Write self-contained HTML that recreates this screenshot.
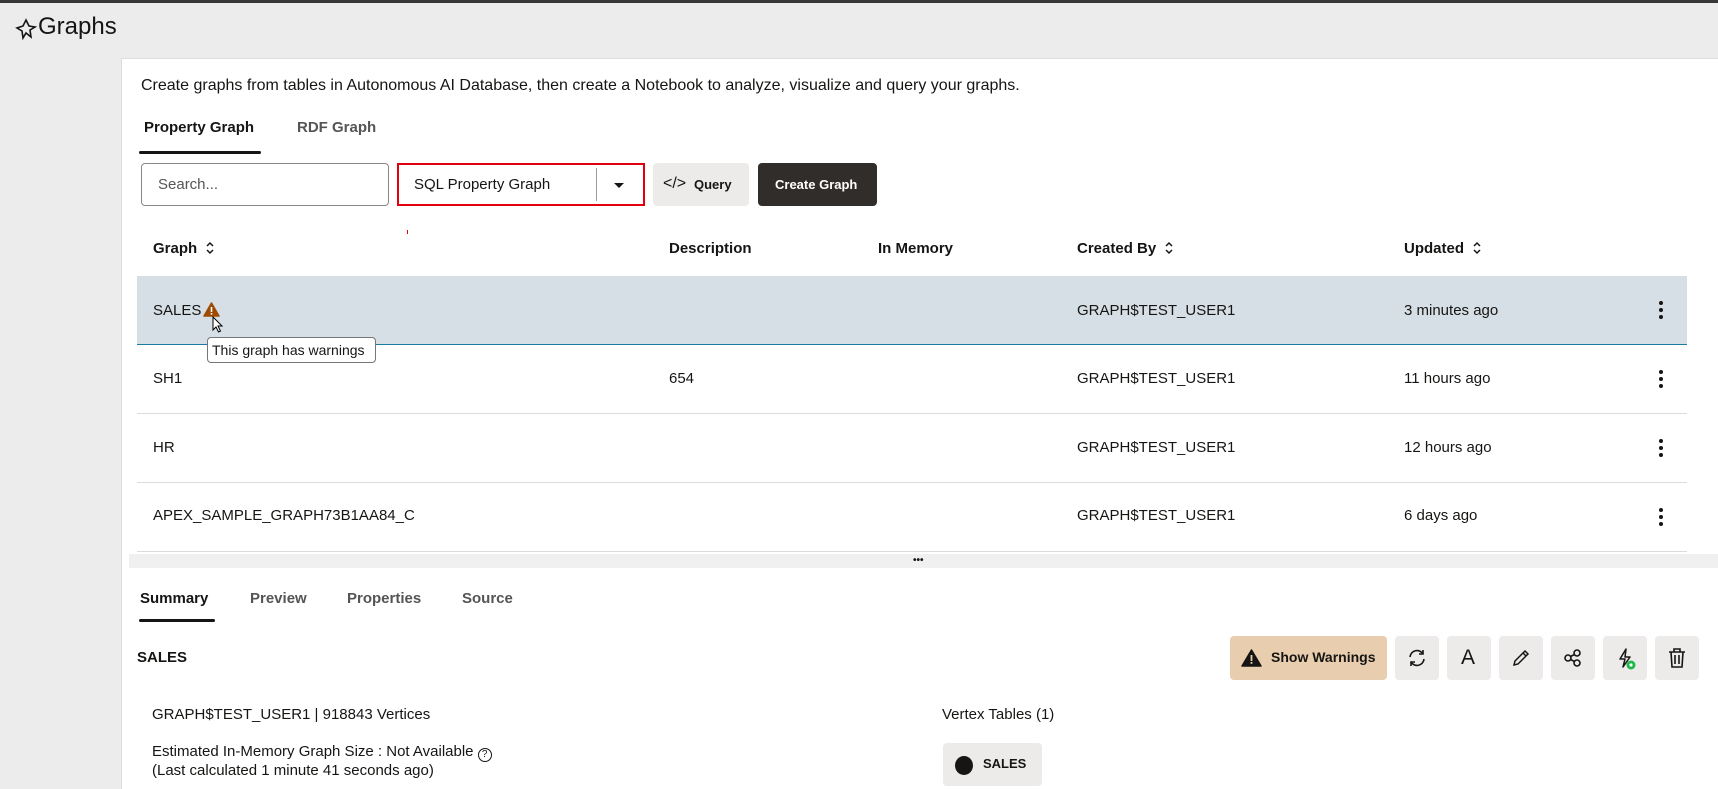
<!DOCTYPE html>
<html><head><meta charset="utf-8"><style>
*{box-sizing:border-box;margin:0;padding:0}
body{width:1718px;height:789px;overflow:hidden;background:#ececec;font-family:"Liberation Sans",sans-serif;color:#161513;position:relative}
.a{position:absolute;white-space:nowrap}
.topbar{position:absolute;left:0;top:0;width:1718px;height:3px;background:#3a3836}
.panel{position:absolute;left:121px;top:58px;width:1597px;height:731px;background:#fff;border-left:1px solid #ddd;border-top:1px solid #ddd}
.f15{font-size:15px}
.b{font-weight:bold}
.btn{position:absolute;background:#ecebea;border-radius:4px}
.sep{position:absolute;left:137px;width:1550px;height:1px;background:#dcdcdc}
.kb{position:absolute;width:4px}
.kb i{display:block;width:4px;height:4px;border-radius:2px;background:#161513;margin-bottom:3px}
.srt{display:inline-block;vertical-align:-2px;margin-left:8px}
</style></head><body>
<div class="topbar"></div>
<svg class="a" style="left:15px;top:18px" width="22" height="22" viewBox="0 0 22 22"><path d="M11 2 L14 8 L20 9 L15 12 L16 19 L11 15 L8 20 L7 13 L2 10 L8 8 Z" fill="none" stroke="#161513" stroke-width="1.6"/></svg>
<div class="a" style="left:38px;top:13px;font-size:24px">Graphs</div>
<div class="panel"></div>
<div class="a" style="left:141px;top:77px;font-size:16px">Create graphs from tables in Autonomous AI Database, then create a Notebook to analyze, visualize and query your graphs.</div>
<div class="a f15 b" style="left:144px;top:119px">Property Graph</div>
<div class="a f15 b" style="left:297px;top:119px;color:#555">RDF Graph</div>
<div class="a" style="left:139px;top:151px;width:122px;height:3px;background:#161513;border-radius:2px"></div>
<div class="a" style="left:141px;top:163px;width:248px;height:43px;border:1px solid #8a8886;border-radius:4px"></div>
<div class="a f15" style="left:158px;top:176px;color:#555">Search...</div>
<div class="a" style="left:397px;top:163px;width:248px;height:43px;border:2px solid #e0000e"></div>
<div class="a f15" style="left:414px;top:176px">SQL Property Graph</div>
<div class="a" style="left:596px;top:168px;width:1px;height:33px;background:#999"></div>
<div class="a" style="left:614px;top:183px;width:0;height:0;border-left:5px solid transparent;border-right:5px solid transparent;border-top:5px solid #161513"></div>
<div class="btn" style="left:653px;top:163px;width:96px;height:43px"></div>
<div class="a" style="left:663px;top:175px;font-size:16px">&lt;/&gt;</div>
<div class="a b" style="left:694px;top:177px;font-size:13px">Query</div>
<div class="btn" style="left:758px;top:163px;width:119px;height:43px;background:#312d2a"></div>
<div class="a b" style="left:775px;top:177px;font-size:13px;color:#fff">Create Graph</div>
<div class="a" style="left:407px;top:230px;width:1px;height:4px;background:#e0000e"></div>
<div class="a f15 b" style="left:153px;top:240px">Graph<svg class="srt" width="10" height="14" viewBox="0 0 10 14" fill="none" stroke="#161513" stroke-width="1.5"><path d="M2 5 L5 2 L8 5 M2 9 L5 12 L8 9"/></svg></div>
<div class="a f15 b" style="left:669px;top:240px">Description</div>
<div class="a f15 b" style="left:878px;top:240px">In Memory</div>
<div class="a f15 b" style="left:1077px;top:240px">Created By<svg class="srt" width="10" height="14" viewBox="0 0 10 14" fill="none" stroke="#161513" stroke-width="1.5"><path d="M2 5 L5 2 L8 5 M2 9 L5 12 L8 9"/></svg></div>
<div class="a f15 b" style="left:1404px;top:240px">Updated<svg class="srt" width="10" height="14" viewBox="0 0 10 14" fill="none" stroke="#161513" stroke-width="1.5"><path d="M2 5 L5 2 L8 5 M2 9 L5 12 L8 9"/></svg></div>
<div class="a" style="left:137px;top:276px;width:1550px;height:69px;background:#d5dfe5;border-bottom:1px solid #1b7aa3"></div>
<div class="a f15" style="left:153px;top:302px">SALES</div>
<svg class="a" style="left:203px;top:302px" width="17" height="15" viewBox="0 0 17 15"><path d="M8.5 1 L16 14 H1 Z" fill="#a04a00" stroke="#a04a00" stroke-linejoin="round" stroke-width="1.5"/><rect x="7.7" y="5" width="1.6" height="5" fill="#fff"/><rect x="7.7" y="11" width="1.6" height="1.6" fill="#fff"/></svg>
<svg class="a" style="left:212px;top:316px" width="12" height="18" viewBox="0 0 12 18"><path d="M1 1 V14 L4 11 L6.5 16 L8.5 15 L6 10 H10 Z" fill="#fff" stroke="#000" stroke-width="1"/></svg>
<div class="a" style="left:207px;top:337px;width:169px;height:26px;border:1px solid #767676;border-radius:4px;background:#fff;font-size:14px;padding:4px 4px">This graph has warnings</div>
<div class="a f15" style="left:1077px;top:302px">GRAPH$TEST_USER1</div>
<div class="a f15" style="left:1404px;top:302px">3 minutes ago</div>
<div class="kb" style="left:1659px;top:301px"><i></i><i></i><i></i></div>
<div class="a f15" style="left:153px;top:370px">SH1</div>
<div class="a f15" style="left:669px;top:370px">654</div>
<div class="a f15" style="left:1077px;top:370px">GRAPH$TEST_USER1</div>
<div class="a f15" style="left:1404px;top:370px">11 hours ago</div>
<div class="kb" style="left:1659px;top:370px"><i></i><i></i><i></i></div>
<div class="sep" style="top:413px"></div>
<div class="a f15" style="left:153px;top:439px">HR</div>
<div class="a f15" style="left:1077px;top:439px">GRAPH$TEST_USER1</div>
<div class="a f15" style="left:1404px;top:439px">12 hours ago</div>
<div class="kb" style="left:1659px;top:439px"><i></i><i></i><i></i></div>
<div class="sep" style="top:482px"></div>
<div class="a f15" style="left:153px;top:507px">APEX_SAMPLE_GRAPH73B1AA84_C</div>
<div class="a f15" style="left:1077px;top:507px">GRAPH$TEST_USER1</div>
<div class="a f15" style="left:1404px;top:507px">6 days ago</div>
<div class="kb" style="left:1659px;top:508px"><i></i><i></i><i></i></div>
<div class="sep" style="top:551px"></div>
<div class="a" style="left:129px;top:554px;width:1589px;height:14px;background:#f0f0f0"></div>
<div class="a" style="left:913px;top:559px;font-size:10px;line-height:4px;font-weight:bold">•••</div>
<div class="a f15 b" style="left:140px;top:590px">Summary</div>
<div class="a f15 b" style="left:250px;top:590px;color:#555">Preview</div>
<div class="a f15 b" style="left:347px;top:590px;color:#555">Properties</div>
<div class="a f15 b" style="left:462px;top:590px;color:#555">Source</div>
<div class="a" style="left:139px;top:619px;width:76px;height:3px;background:#161513;border-radius:2px"></div>
<div class="a f15 b" style="left:137px;top:649px">SALES</div>
<div class="btn" style="left:1230px;top:636px;width:157px;height:44px;background:#e8ceae"></div>
<svg class="a" style="left:1241px;top:649px" width="21" height="18" viewBox="0 0 21 18"><path d="M10.5 1 L20 17 H1 Z" fill="#161513" stroke="#161513" stroke-linejoin="round" stroke-width="1.5"/><rect x="9.6" y="6" width="1.8" height="6" fill="#e8ceae"/><rect x="9.6" y="13" width="1.8" height="1.8" fill="#e8ceae"/></svg>
<div class="a b" style="left:1271px;top:649px;font-size:14px">Show Warnings</div>
<div class="btn" style="left:1395px;top:636px;width:44px;height:44px"></div>
<svg class="a" style="left:1405px;top:646px" width="24" height="24" viewBox="0 0 24 24" fill="none" stroke="#161513" stroke-width="1.6"><path d="M5 11 A7 7 0 0 1 18 8"/><path d="M19 13 A7 7 0 0 1 6 16"/><path d="M18 4 V8 H14" /><path d="M6 20 V16 H10"/></svg>
<div class="btn" style="left:1447px;top:636px;width:44px;height:44px"></div>
<div class="a" style="left:1461px;top:646px;font-size:21px">A</div>
<div class="btn" style="left:1499px;top:636px;width:44px;height:44px"></div>
<svg class="a" style="left:1509px;top:646px" width="24" height="24" viewBox="0 0 24 24" fill="none" stroke="#161513" stroke-width="1.5"><path d="M5 19 L6 15 L16 5 L19 8 L9 18 Z M14 7 L17 10"/></svg>
<div class="btn" style="left:1551px;top:636px;width:44px;height:44px"></div>
<svg class="a" style="left:1561px;top:646px" width="24" height="24" viewBox="0 0 24 24" fill="none" stroke="#161513" stroke-width="1.6"><circle cx="7" cy="12" r="3"/><circle cx="16" cy="7" r="3"/><circle cx="16" cy="17" r="3"/><path d="M9.5 10.5 L13.5 8.5 M9.5 13.5 L13.5 15.5"/></svg>
<div class="btn" style="left:1603px;top:636px;width:44px;height:44px"></div>
<svg class="a" style="left:1613px;top:646px" width="26" height="26" viewBox="0 0 26 26"><path d="M13 3 L7 13 H12 L10 21 L17 11 H12 Z" fill="none" stroke="#161513" stroke-width="1.5" stroke-linejoin="round"/><circle cx="18" cy="19" r="4.5" fill="#1fb84a"/><circle cx="18" cy="19" r="1.6" fill="#fff"/></svg>
<div class="btn" style="left:1655px;top:636px;width:44px;height:44px"></div>
<svg class="a" style="left:1665px;top:646px" width="24" height="24" viewBox="0 0 24 24" fill="none" stroke="#161513" stroke-width="1.6"><path d="M4 6 H20 M9 6 V3 H15 V6 M6 6 L7 21 H17 L18 6 M10 9 V18 M14 9 V18"/></svg>
<div class="a f15" style="left:152px;top:706px">GRAPH$TEST_USER1 | 918843 Vertices</div>
<div class="a f15" style="left:152px;top:743px">Estimated In-Memory Graph Size : Not Available <span style="display:inline-block;width:14px;height:14px;border:1.3px solid #161513;border-radius:50%;font-size:10px;text-align:center;line-height:12px;vertical-align:-1px">?</span></div>
<div class="a f15" style="left:152px;top:762px">(Last calculated 1 minute 41 seconds ago)</div>
<div class="a f15" style="left:942px;top:706px">Vertex Tables (1)</div>
<div class="btn" style="left:943px;top:743px;width:99px;height:43px"></div>
<div class="a" style="left:955px;top:756px;width:18px;height:19px;border-radius:50%;background:#161513"></div>
<div class="a b" style="left:983px;top:756px;font-size:13px">SALES</div>
</body></html>
